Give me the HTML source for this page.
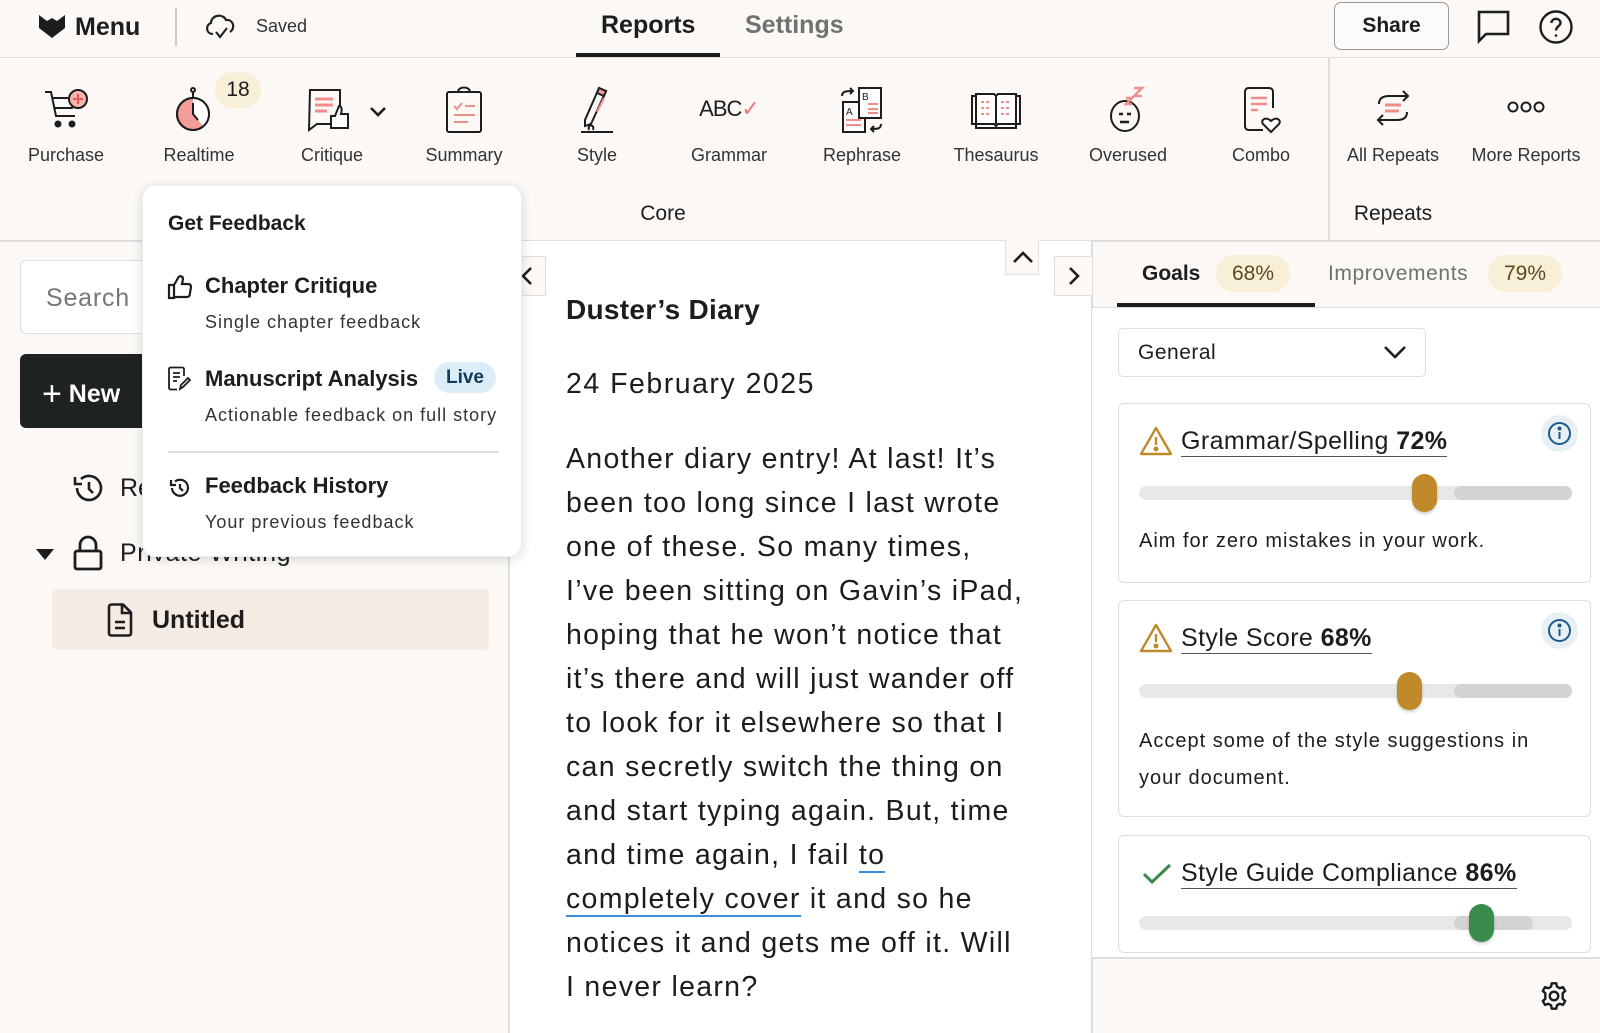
<!DOCTYPE html>
<html><head><meta charset="utf-8"><style>
*{box-sizing:border-box;margin:0;padding:0}
body{width:1600px;height:1033px;position:relative;overflow:hidden;background:#fbf8f5;font-family:"Liberation Sans",sans-serif;color:#1d1d1d}
.a{position:absolute}
.lbl{position:absolute;top:145px;font-size:18px;color:#333;transform:translateX(-50%);white-space:nowrap}
.ic{position:absolute;top:86px;transform:translateX(-50%)}
.card{position:absolute;left:1118px;width:473px;border:1.5px solid #ddd;border-radius:6px;background:#fff}
.track{position:absolute;left:20px;width:433px;height:14px;border-radius:7px;background:#e8e8e8}
.thumb{position:absolute;width:25px;height:38px;border-radius:13px;top:-12px;box-shadow:0 2px 3px rgba(0,0,0,.2)}
.ct{position:absolute;left:62px;font-size:25px;border-bottom:1.5px solid #555;line-height:30px;white-space:nowrap;letter-spacing:.4px}
.body p{font-size:28.5px;line-height:44px;white-space:nowrap;color:#1c1c1c;letter-spacing:1.3px}
.sub{letter-spacing:1px}
</style></head><body>
<!-- top bar -->
<div class="a" style="left:0;top:0;width:1600px;height:58px;border-bottom:1.5px solid #ddd"></div>
<svg class="a" style="left:38px;top:14px" width="28" height="24" viewBox="0 0 28 24"><path d="M1 1 L9 7 L14 4 L19 7 L27 1 L27 14 L14 24 L1 14Z" fill="#1d1d1d"/></svg>
<div class="a" style="left:75px;top:13px;font-size:25px;font-weight:bold">Menu</div>
<div class="a" style="left:175px;top:8px;width:1.5px;height:38px;background:#ccc"></div>
<svg class="a" style="left:203px;top:11px" width="34" height="30" viewBox="0 0 34 30" fill="none" stroke="#222" stroke-width="2.2"><path d="M10 23 C3 23 2 14 8 12 C8 4 20 2 23 9 C30 8 33 17 27 21"/><path d="M13 21 L17 26 L24 17"/></svg>
<div class="a" style="left:256px;top:16px;font-size:18px;color:#333">Saved</div>
<div class="a" style="left:601px;top:11px;font-size:25px;font-weight:bold;color:#1d1d1d">Reports</div>
<div class="a" style="left:576px;top:53px;width:144px;height:4px;background:#1d1d1d"></div>
<div class="a" style="left:745px;top:11px;font-size:25px;font-weight:bold;color:#6d736f">Settings</div>
<div class="a" style="left:1334px;top:2px;width:115px;height:48px;border:1.5px solid #999;border-radius:7px;background:#fdfbf9;font-size:21px;font-weight:bold;text-align:center;line-height:45px">Share</div>
<svg class="a" style="left:1476px;top:9px" width="36" height="36" viewBox="0 0 36 36" fill="none" stroke="#1d1d1d" stroke-width="2.6"><path d="M3 3 H32 V25 H10 L3 32Z"/></svg>
<svg class="a" style="left:1538px;top:9px" width="36" height="36" viewBox="0 0 36 36" fill="none" stroke="#1d1d1d" stroke-width="2.4"><circle cx="18" cy="18" r="15.5"/><path d="M13.5 14 C13.5 8.5 22.5 8.5 22.5 14 C22.5 17 18 17.5 18 21.5"/><circle cx="18" cy="26.5" r="1.3" fill="#1d1d1d" stroke="none"/></svg>

<!-- toolbar -->
<div class="a" style="left:0;top:240px;width:1600px;height:1.5px;background:#ddd"></div>
<div class="a" style="left:1328px;top:58px;width:1.5px;height:182px;background:#ddd"></div>
<svg class="ic" style="left:66px" width="48" height="46" viewBox="0 0 48 46" fill="none" stroke="#1d1d1d" stroke-width="2"><path d="M3 6 H9 L14 30 H33"/><path d="M10 12 H26"/><path d="M12 22 H30 L32 15"/><circle cx="16" cy="38" r="2.5" fill="#1d1d1d"/><circle cx="30" cy="38" r="2.5" fill="#1d1d1d"/><circle cx="36" cy="13" r="9" fill="#f7b5b0" stroke="#1d1d1d"/><path d="M36 8 V18 M31 13 H41" stroke="#e55"/></svg>
<div class="lbl" style="left:66px">Purchase</div>
<svg class="ic" style="left:199px" width="48" height="48" viewBox="0 0 48 48" fill="none" stroke="#1d1d1d" stroke-width="2"><circle cx="18" cy="28" r="16" fill="#f49c9a"/><path d="M18 12 A16 16 0 0 1 34 28 A16 16 0 0 1 28 40 L18 28Z" fill="#fff" stroke="none"/><circle cx="18" cy="28" r="16"/><path d="M18 17 V28 L23 34"/><path d="M18 12 V6"/><circle cx="18" cy="4" r="2"/></svg>
<div class="a" style="left:215px;top:72px;width:46px;height:36px;border-radius:18px;background:#f8efd9;font-size:21px;text-align:center;line-height:36px">18</div>
<div class="lbl" style="left:199px">Realtime</div>
<svg class="ic" style="left:347px" width="84" height="46" viewBox="0 0 84 46" fill="none" stroke="#1d1d1d" stroke-width="2"><path d="M5 4 H35 V38 H12 L4 44 Z"/><path d="M10 13 H28 M10 19 H28 M10 25 H22" stroke="#f08f8a" stroke-width="3"/><path d="M26 42 V30 H30 L34 20 C37 20 37 24 36 28 H43 V42Z" fill="#fff"/><path d="M66 22 L73 29 L80 22" stroke-width="2.6"/></svg>
<div class="lbl" style="left:332px">Critique</div>
<svg class="ic" style="left:464px" width="40" height="48" viewBox="0 0 40 48" fill="none" stroke="#1d1d1d" stroke-width="2"><rect x="3" y="6" width="34" height="40" rx="2"/><path d="M14 6 C14 0 26 0 26 6 Z" fill="#fff"/><path d="M10 20 L13 23 L18 17 M21 20 H31 M10 29 H31 M10 36 H24" stroke="#f08f8a"/></svg>
<div class="lbl" style="left:464px">Summary</div>
<svg class="ic" style="left:597px" width="36" height="48" viewBox="0 0 36 48" fill="none" stroke="#1d1d1d" stroke-width="2"><path d="M20 2 L27 5 L12 38 L6 40 L6 34 Z"/><path d="M20 2 L27 5 L25 10 L18 7Z" fill="#f49c9a"/><path d="M25 12 L18 26" stroke="#f08f8a"/><path d="M2 46 H34"/><path d="M10 44 C8 38 16 38 14 44"/></svg>
<div class="lbl" style="left:597px">Style</div>
<div class="ic" style="left:729px;top:96px;font-size:22px;letter-spacing:-1px">ABC<span style="color:#e77">✓</span></div>
<div class="lbl" style="left:729px">Grammar</div>
<svg class="ic" style="left:862px" width="46" height="48" viewBox="0 0 46 48" fill="none" stroke="#1d1d1d" stroke-width="2"><rect x="4" y="16" width="22" height="30" fill="#fff"/><rect x="20" y="2" width="22" height="30" fill="#fff"/><text x="7" y="29" font-size="10" fill="#1d1d1d" stroke="none" font-family="Liberation Sans">A</text><text x="23" y="14" font-size="10" fill="#1d1d1d" stroke="none" font-family="Liberation Sans">B</text><path d="M7 34 H22 M7 39 H22 M29 18 H39 M29 23 H39 M29 27 H39" stroke="#f08f8a"/><path d="M3 10 C3 5 8 5 14 5 M11 2 L14 5 L11 8 M42 38 C42 43 38 43 32 43 M35 40 L32 43 L35 46"/></svg>
<div class="lbl" style="left:862px">Rephrase</div>
<svg class="ic" style="left:996px;top:90px" width="52" height="40" viewBox="0 0 52 40" fill="none" stroke="#1d1d1d" stroke-width="2"><path d="M2 6 H6 V34 H2Z M50 6 H46 V34 H50Z"/><path d="M6 34 H46 V38 H6Z"/><path d="M6 4 H24 L26 6 L28 4 H46 V34 H28 L26 36 L24 34 H6Z" fill="#fff"/><path d="M26 6 V34"/><path d="M11 12 H20 M11 18 H20 M11 24 H20 M31 12 H40 M31 18 H40 M31 24 H40" stroke="#f08f8a" stroke-dasharray="3 2"/></svg>
<div class="lbl" style="left:996px">Thesaurus</div>
<svg class="ic" style="left:1128px" width="40" height="48" viewBox="0 0 40 48" fill="none" stroke="#1d1d1d" stroke-width="2"><ellipse cx="17" cy="30" rx="14" ry="15"/><path d="M11 28 H15 M19 28 H23 M12 36 H21" stroke-width="2.5"/><path d="M26 2 H34 L26 10 H34 M18 12 H24 L18 18 H24" stroke="#f08f8a" stroke-width="2.4"/></svg>
<div class="lbl" style="left:1128px">Overused</div>
<svg class="ic" style="left:1261px" width="40" height="48" viewBox="0 0 40 48" fill="none" stroke="#1d1d1d" stroke-width="2"><path d="M22 44 H8 C5 44 4 42 4 40 V6 C4 4 5 2 8 2 H28 C31 2 32 4 32 6 V22"/><path d="M10 12 H26 M10 18 H26 M10 24 H17" stroke="#f08f8a" stroke-width="2.5"/><path d="M30 46 L22 38 C19 34 25 30 30 35 C35 30 41 34 38 38Z" fill="#fff"/></svg>
<div class="lbl" style="left:1261px">Combo</div>
<svg class="ic" style="left:1393px" width="40" height="44" viewBox="0 0 40 44" fill="none" stroke="#1d1d1d" stroke-width="2"><path d="M6 18 C6 12 10 10 16 10 H34 M30 5 L35 10 L30 15"/><path d="M34 26 C34 32 30 34 24 34 H6 M10 29 L5 34 L10 39"/><path d="M12 19 H28 M12 25 H26" stroke="#f08f8a" stroke-width="3"/></svg>
<div class="lbl" style="left:1393px">All Repeats</div>
<svg class="ic" style="left:1526px;top:100px" width="38" height="14" viewBox="0 0 38 14" fill="none" stroke="#1d1d1d" stroke-width="2"><circle cx="6" cy="7" r="4.5"/><circle cx="19" cy="7" r="4.5"/><circle cx="32" cy="7" r="4.5"/></svg>
<div class="lbl" style="left:1526px">More Reports</div>
<div class="a" style="left:663px;top:202px;font-size:21px;transform:translateX(-50%)">Core</div>
<div class="a" style="left:1393px;top:202px;font-size:21px;transform:translateX(-50%)">Repeats</div>

<!-- left panel -->
<div class="a" style="left:508px;top:240px;width:1.5px;height:793px;background:#ddd"></div>
<div class="a" style="left:20px;top:260px;width:470px;height:74px;border:1.5px solid #ddd;border-radius:6px;background:#fff;font-size:25px;color:#777;padding:23px 0 0 25px;letter-spacing:.8px">Search</div>
<div class="a" style="left:20px;top:354px;width:250px;height:74px;border-radius:6px;background:#1e2322;color:#fff;font-size:25px;font-weight:bold;padding:21px 0 0 22px"><span style="font-size:34px;font-weight:normal;vertical-align:-3px">+</span> New</div>
<svg class="a" style="left:72px;top:472px" width="34" height="32" viewBox="0 0 34 32" fill="none" stroke="#1d1d1d" stroke-width="2.6"><path d="M5 16 A12 12 0 1 0 9 7"/><path d="M3 5 V12 H10"/><path d="M17 10 V17 L21 21"/></svg>
<div class="a" style="left:120px;top:474px;font-size:25px">Recent</div>
<div class="a" style="left:36px;top:549px;width:0;height:0;border-left:9px solid transparent;border-right:9px solid transparent;border-top:11px solid #1d1d1d"></div>
<svg class="a" style="left:73px;top:535px" width="30" height="36" viewBox="0 0 30 36" fill="none" stroke="#1d1d1d" stroke-width="2.8"><rect x="2" y="16" width="26" height="18" rx="2"/><path d="M7 16 V10 A8 8 0 0 1 23 10 V16"/></svg>
<div class="a" style="left:120px;top:539px;font-size:25px;letter-spacing:.6px">Private Writing</div>
<div class="a" style="left:52px;top:589px;width:437px;height:61px;border-radius:6px;background:#f4ece4"></div>
<svg class="a" style="left:106px;top:603px" width="28" height="34" viewBox="0 0 28 34" fill="none" stroke="#1d1d1d" stroke-width="2.6"><path d="M3 4 C3 2 4 1.5 6 1.5 H17 L25 9.5 V30 C25 32 24 32.5 22 32.5 H6 C4 32.5 3 32 3 30Z"/><path d="M16 2 V10 H25 M9 19 H19 M9 25 H19"/></svg>
<div class="a" style="left:152px;top:606px;font-size:25px;font-weight:bold">Untitled</div>

<!-- editor -->
<div class="a" style="left:510px;top:241px;width:581px;height:792px;background:#fff"></div>
<div class="a" style="left:1091px;top:240px;width:1.5px;height:793px;background:#ddd"></div>
<div class="a" style="left:509px;top:256px;width:37px;height:40px;border:1.5px solid #e6e0da;border-left:none;background:#fbf8f5"></div>
<svg class="a" style="left:520px;top:266px" width="14" height="20" viewBox="0 0 14 20" fill="none" stroke="#1d1d1d" stroke-width="2.6"><path d="M11 2 L3 10 L11 18"/></svg>
<div class="a" style="left:1005px;top:240px;width:34px;height:35px;border:1.5px solid #e6e0da;border-top:none;background:#fbf8f5"></div>
<svg class="a" style="left:1012px;top:250px" width="22" height="14" viewBox="0 0 22 14" fill="none" stroke="#1d1d1d" stroke-width="2.6"><path d="M2 12 L11 3 L20 12"/></svg>
<div class="a" style="left:1054px;top:256px;width:38px;height:40px;border:1.5px solid #e6e0da;border-right:none;background:#fbf8f5"></div>
<svg class="a" style="left:1067px;top:266px" width="14" height="20" viewBox="0 0 14 20" fill="none" stroke="#1d1d1d" stroke-width="2.6"><path d="M3 2 L11 10 L3 18"/></svg>
<div class="a" style="left:566px;top:294px;font-size:28px;font-weight:bold;letter-spacing:.3px">Duster’s Diary</div>
<div class="a" style="left:566px;top:368px;font-size:28.5px;letter-spacing:1.5px">24 February 2025</div>
<div class="a body" style="left:566px;top:437px">
<p>Another diary entry! At last! It’s</p>
<p>been too long since I last wrote</p>
<p>one of these. So many times,</p>
<p>I’ve been sitting on Gavin’s iPad,</p>
<p>hoping that he won’t notice that</p>
<p>it’s there and will just wander off</p>
<p>to look for it elsewhere so that I</p>
<p>can secretly switch the thing on</p>
<p>and start typing again. But, time</p>
<p>and time again, I fail <span style="border-bottom:2px solid #3d8bd6">to </span></p>
<p><span style="border-bottom:2px solid #3d8bd6">completely cover</span> it and so he</p>
<p>notices it and gets me off it. Will</p>
<p>I never learn?</p>
</div>

<!-- popup -->
<div class="a" style="left:142px;top:185px;width:380px;height:372px;background:#fff;border-radius:13px;box-shadow:0 2px 10px rgba(0,0,0,.15);border:1px solid #eee;z-index:10">
 <div class="a" style="left:25px;top:26px;font-size:21px;font-weight:bold">Get Feedback</div>
 <svg class="a" style="left:24px;top:88px" width="26" height="26" viewBox="0 0 26 26" fill="none" stroke="#1d1d1d" stroke-width="2.2"><path d="M2 11 H7 V24 H2Z M7 23 H20 C22 23 23 21 23 19 L24 13 C24 11 23 10 21 10 H15 L16 5 C16 2 12 1 11 4 L7 11"/></svg>
 <div class="a" style="left:62px;top:87px;font-size:22px;font-weight:bold">Chapter Critique</div>
 <div class="a sub" style="left:62px;top:126px;font-size:18px;color:#333">Single chapter feedback</div>
 <svg class="a" style="left:24px;top:180px" width="24" height="26" viewBox="0 0 24 26" fill="none" stroke="#1d1d1d" stroke-width="1.8"><path d="M17 10 V3 C17 2 16 1.5 15 1.5 H4 C3 1.5 2 2 2 3 V22 C2 23 3 23.5 4 23.5 H10"/><path d="M6 7 H13 M6 11 H13 M6 15 H10"/><path d="M13 23 L14 19 L21 12 L23 14 L16 21Z"/></svg>
 <div class="a" style="left:62px;top:180px;font-size:22px;font-weight:bold">Manuscript Analysis</div>
 <div class="a" style="left:291px;top:176px;width:62px;height:31px;border-radius:16px;background:#dcedf7;color:#0f3b5c;font-size:19px;font-weight:bold;text-align:center;line-height:31px">Live</div>
 <div class="a sub" style="left:62px;top:219px;font-size:18px;color:#333">Actionable feedback on full story</div>
 <div class="a" style="left:25px;top:265px;width:331px;height:1.5px;background:#ddd"></div>
 <svg class="a" style="left:25px;top:290px" width="24" height="24" viewBox="0 0 24 24" fill="none" stroke="#1d1d1d" stroke-width="2.2"><path d="M4 12 A8 8 0 1 0 7 5.5"/><path d="M3 4 V9 H8"/><path d="M12 8 V12 L15 15"/></svg>
 <div class="a" style="left:62px;top:287px;font-size:22px;font-weight:bold">Feedback History</div>
 <div class="a sub" style="left:62px;top:326px;font-size:18px;color:#333">Your previous feedback</div>
</div>

<!-- right panel -->
<div class="a" style="left:1092px;top:307px;width:508px;height:650px;background:#fff;border-top:1.5px solid #ddd"></div>
<div class="a" style="left:1092px;top:957px;width:508px;height:1.5px;background:#ddd"></div>
<div class="a" style="left:1142px;top:262px;font-size:21px;font-weight:bold">Goals</div>
<div class="a" style="left:1216px;top:255px;width:74px;height:37px;border-radius:18px;background:#f8efd9;color:#5c4a1a;font-size:21px;text-align:center;line-height:37px">68%</div>
<div class="a" style="left:1117px;top:303px;width:198px;height:4px;background:#1d1d1d"></div>
<div class="a" style="left:1328px;top:262px;font-size:21px;color:#6d736f;letter-spacing:.6px">Improvements</div>
<div class="a" style="left:1488px;top:255px;width:74px;height:37px;border-radius:18px;background:#f8efd9;color:#5c4a1a;font-size:21px;text-align:center;line-height:37px">79%</div>
<div class="a" style="left:1118px;top:328px;width:308px;height:49px;border:1.5px solid #ddd;border-radius:5px;background:#fff;font-size:21px;padding:12px 0 0 19px;letter-spacing:.5px">General</div>
<svg class="a" style="left:1383px;top:345px" width="24" height="15" viewBox="0 0 24 15" fill="none" stroke="#1d1d1d" stroke-width="2.6"><path d="M2 2 L12 12 L22 2"/></svg>

<div class="card" style="top:403px;height:180px">
 <svg class="a" style="left:20px;top:22px" width="34" height="30" viewBox="0 0 34 30" fill="none" stroke="#c08a2a" stroke-width="2.4"><path d="M17 2 L32 28 H2Z" stroke-linejoin="round"/><path d="M17 11 V19"/><circle cx="17" cy="23" r="1.3" fill="#c08a2a"/></svg>
 <div class="ct" style="top:22px">Grammar/Spelling <b>72%</b></div>
 <div class="a" style="left:422px;top:11px;width:37px;height:37px;border-radius:50%;background:#e8f0f4"></div>
 <svg class="a" style="left:428px;top:17px" width="25" height="25" viewBox="0 0 25 25" fill="none" stroke="#1b5a8a" stroke-width="2"><circle cx="12.5" cy="12.5" r="10.5"/><path d="M12.5 11 V18"/><circle cx="12.5" cy="7.5" r="1" fill="#1b5a8a"/></svg>
 <div class="track" style="top:82px"><div class="a" style="left:315px;width:118px;height:14px;border-radius:7px;background:#d3d3d3"></div><div class="thumb" style="left:273px;background:#c08a2a"></div></div>
 <div class="a sub" style="left:20px;top:126px;font-size:20px">Aim for zero mistakes in your work.</div>
</div>
<div class="card" style="top:600px;height:217px">
 <svg class="a" style="left:20px;top:22px" width="34" height="30" viewBox="0 0 34 30" fill="none" stroke="#c08a2a" stroke-width="2.4"><path d="M17 2 L32 28 H2Z" stroke-linejoin="round"/><path d="M17 11 V19"/><circle cx="17" cy="23" r="1.3" fill="#c08a2a"/></svg>
 <div class="ct" style="top:22px">Style Score <b>68%</b></div>
 <div class="a" style="left:422px;top:11px;width:37px;height:37px;border-radius:50%;background:#e8f0f4"></div>
 <svg class="a" style="left:428px;top:17px" width="25" height="25" viewBox="0 0 25 25" fill="none" stroke="#1b5a8a" stroke-width="2"><circle cx="12.5" cy="12.5" r="10.5"/><path d="M12.5 11 V18"/><circle cx="12.5" cy="7.5" r="1" fill="#1b5a8a"/></svg>
 <div class="track" style="top:83px"><div class="a" style="left:315px;width:118px;height:14px;border-radius:7px;background:#d3d3d3"></div><div class="thumb" style="left:258px;background:#c08a2a"></div></div>
 <div class="a sub" style="left:20px;top:122px;font-size:20px;line-height:37px;white-space:nowrap">Accept some of the style suggestions in<br>your document.</div>
</div>
<div class="card" style="top:835px;height:118px">
 <svg class="a" style="left:22px;top:26px" width="32" height="24" viewBox="0 0 32 24" fill="none" stroke="#3a8a4c" stroke-width="3"><path d="M3 12 L11 20 L29 3"/></svg>
 <div class="ct" style="top:22px">Style Guide Compliance <b>86%</b></div>
 <div class="track" style="top:80px"><div class="a" style="left:315px;width:79px;height:14px;border-radius:7px;background:#d3d3d3"></div><div class="thumb" style="left:330px;background:#3a8a4c"></div></div>
</div>
<svg class="a" style="left:1538px;top:980px" width="32" height="32" viewBox="0 0 24 24" fill="none" stroke="#1d1d1d" stroke-width="1.8"><circle cx="12" cy="12" r="3.2"/><path d="M10.3 2.5 H13.7 L14.2 5 L16.3 6.2 L18.7 5.3 L20.4 8.2 L18.5 9.9 V12.1 V14.1 L20.4 15.8 L18.7 18.7 L16.3 17.8 L14.2 19 L13.7 21.5 H10.3 L9.8 19 L7.7 17.8 L5.3 18.7 L3.6 15.8 L5.5 14.1 V9.9 L3.6 8.2 L5.3 5.3 L7.7 6.2 L9.8 5Z" stroke-linejoin="round"/></svg>
</body></html>
